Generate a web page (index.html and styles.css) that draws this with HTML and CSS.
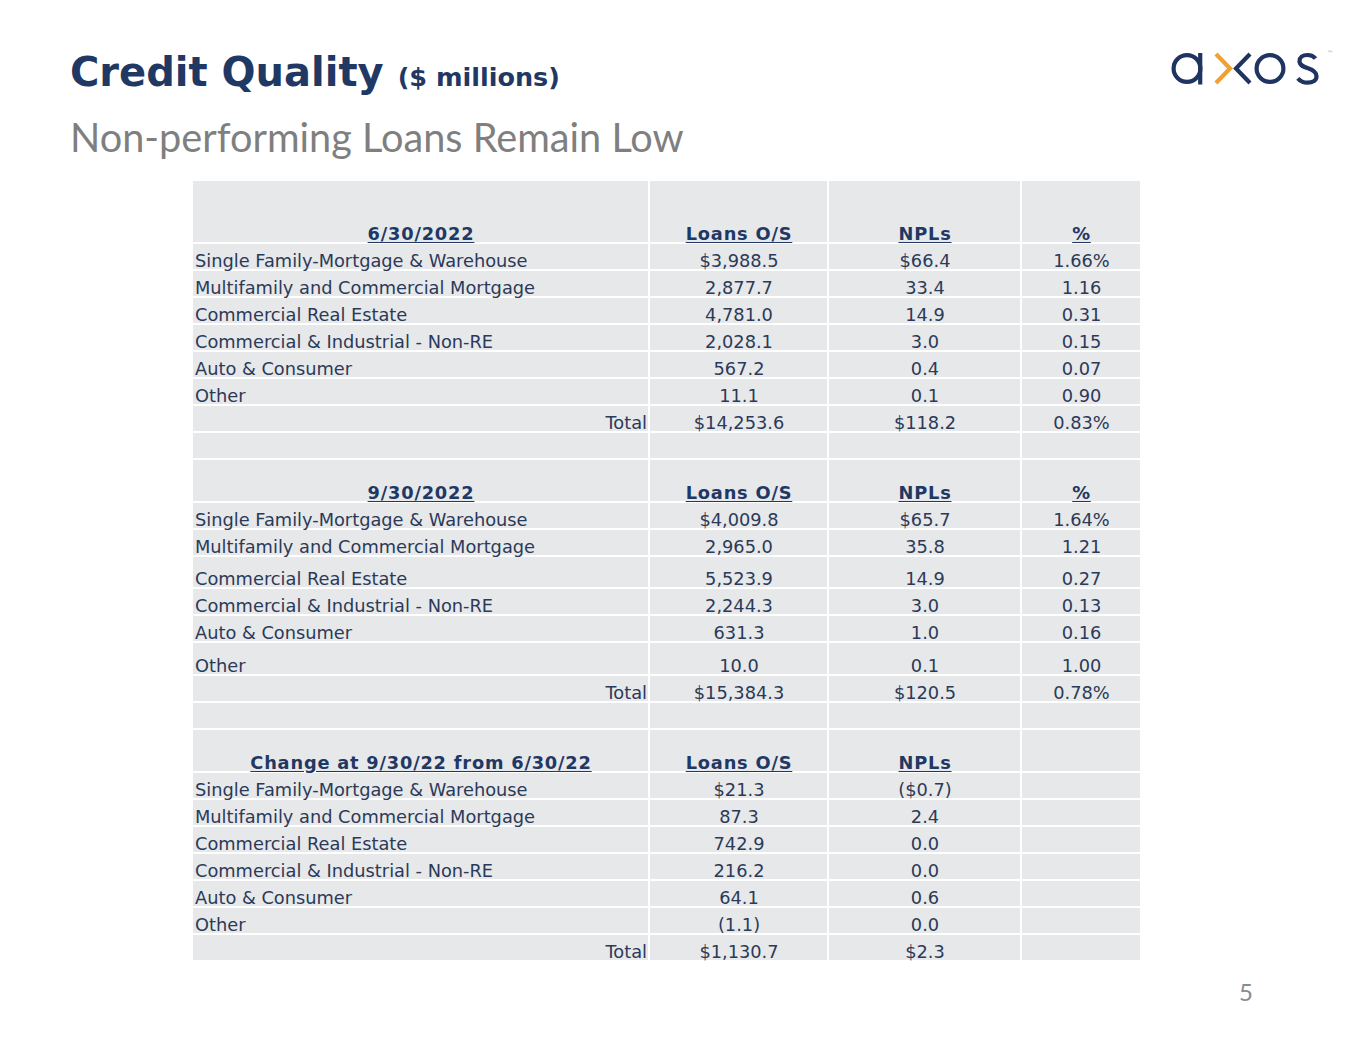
FILE: index.html
```html
<!DOCTYPE html>
<html lang="en">
<head>
<meta charset="utf-8">
<title>Credit Quality</title>
<link rel="stylesheet" href="styles.css">
</head>
<body>
<div class="slide">
  <header class="top">
    <div class="titles">
      <h1 class="title">Credit Quality <span class="unit">($ millions)</span></h1>
      <h2 class="subtitle">Non-performing Loans Remain Low</h2>
    </div>
    <svg class="logo" width="175" height="45" viewBox="1165 45 175 45" aria-label="axos">
      <g fill="none" stroke="#1f3461" stroke-width="4.2">
        <circle cx="1187" cy="68.5" r="13.4"/>
        <line x1="1200.2" y1="53" x2="1200.2" y2="84.5"/>
        <polyline points="1250,54 1236,68.5 1250,83"/>
        <circle cx="1270" cy="68.5" r="13.4"/>
        <path d="M1315.5 58.5 C1313.5 56 1310.5 55 1307.5 55 C1302.5 55 1299.5 57.5 1299.5 61.3 C1299.5 65.5 1304 67 1308 68.3 C1312.5 69.8 1316.5 71.5 1316.5 76.2 C1316.5 80.2 1312.8 82.7 1307.5 82.7 C1303.8 82.7 1300.3 81.2 1297.8 78.3"/>
      </g>
      <polyline points="1216,54 1230,68.5 1216,83" fill="none" stroke="#f0a034" stroke-width="4.2"/>
      <text x="1327" y="55" class="tm">™</text>
    </svg>
  </header>

  <table class="npl">
    <colgroup>
      <col class="c1"><col class="c2"><col class="c3"><col class="c4">
    </colgroup>
    <tbody>
      <tr class="hd hd-tall"><th>6/30/2022</th><th>Loans O/S</th><th>NPLs</th><th>%</th></tr>
      <tr><td class="lbl">Single Family-Mortgage &amp; Warehouse</td><td>$3,988.5</td><td>$66.4</td><td>1.66%</td></tr>
      <tr><td class="lbl">Multifamily and Commercial Mortgage</td><td>2,877.7</td><td>33.4</td><td>1.16</td></tr>
      <tr><td class="lbl">Commercial Real Estate</td><td>4,781.0</td><td>14.9</td><td>0.31</td></tr>
      <tr><td class="lbl">Commercial &amp; Industrial - Non-RE</td><td>2,028.1</td><td>3.0</td><td>0.15</td></tr>
      <tr><td class="lbl">Auto &amp; Consumer</td><td>567.2</td><td>0.4</td><td>0.07</td></tr>
      <tr><td class="lbl">Other</td><td>11.1</td><td>0.1</td><td>0.90</td></tr>
      <tr><td class="tot">Total</td><td>$14,253.6</td><td>$118.2</td><td>0.83%</td></tr>
      <tr><td></td><td></td><td></td><td></td></tr>

      <tr class="hd"><th>9/30/2022</th><th>Loans O/S</th><th>NPLs</th><th>%</th></tr>
      <tr><td class="lbl">Single Family-Mortgage &amp; Warehouse</td><td>$4,009.8</td><td>$65.7</td><td>1.64%</td></tr>
      <tr><td class="lbl">Multifamily and Commercial Mortgage</td><td>2,965.0</td><td>35.8</td><td>1.21</td></tr>
      <tr class="t30"><td class="lbl">Commercial Real Estate</td><td>5,523.9</td><td>14.9</td><td>0.27</td></tr>
      <tr><td class="lbl">Commercial &amp; Industrial - Non-RE</td><td>2,244.3</td><td>3.0</td><td>0.13</td></tr>
      <tr><td class="lbl">Auto &amp; Consumer</td><td>631.3</td><td>1.0</td><td>0.16</td></tr>
      <tr class="t31"><td class="lbl">Other</td><td>10.0</td><td>0.1</td><td>1.00</td></tr>
      <tr><td class="tot">Total</td><td>$15,384.3</td><td>$120.5</td><td>0.78%</td></tr>
      <tr><td></td><td></td><td></td><td></td></tr>

      <tr class="hd"><th>Change at 9/30/22 from 6/30/22</th><th>Loans O/S</th><th>NPLs</th><th></th></tr>
      <tr><td class="lbl">Single Family-Mortgage &amp; Warehouse</td><td>$21.3</td><td>($0.7)</td><td></td></tr>
      <tr><td class="lbl">Multifamily and Commercial Mortgage</td><td>87.3</td><td>2.4</td><td></td></tr>
      <tr><td class="lbl">Commercial Real Estate</td><td>742.9</td><td>0.0</td><td></td></tr>
      <tr><td class="lbl">Commercial &amp; Industrial - Non-RE</td><td>216.2</td><td>0.0</td><td></td></tr>
      <tr><td class="lbl">Auto &amp; Consumer</td><td>64.1</td><td>0.6</td><td></td></tr>
      <tr><td class="lbl">Other</td><td>(1.1)</td><td>0.0</td><td></td></tr>
      <tr><td class="tot">Total</td><td>$1,130.7</td><td>$2.3</td><td></td></tr>
    </tbody>
  </table>

  <footer class="pagenum">5</footer>
</div>
</body>
</html>
```

FILE: styles.css
```css
html, body {
  margin: 0;
  padding: 0;
  background: #ffffff;
}

.slide {
  width: 1365px;
  height: 1055px;
  overflow: hidden;
}

.top {
  display: flex;
  justify-content: space-between;
  align-items: flex-start;
  padding: 0 25px 0 70px;
}

.titles {
  display: flex;
  flex-direction: column;
}

.title {
  margin: 0;
  padding-top: 49px;
  font-family: "DejaVu Sans", Verdana, sans-serif;
  font-weight: bold;
  font-size: 40px;
  line-height: 46px;
  color: #1f3864;
  white-space: nowrap;
}

.unit {
  font-size: 25.5px;
}

.subtitle {
  margin: 13px 0 0 0;
  font-family: Lato, "Open Sans", sans-serif;
  font-weight: normal;
  font-size: 39.7px;
  line-height: 48px;
  color: #7f7f7f;
  white-space: nowrap;
}

.logo {
  display: block;
  margin-top: 45px;
}

.tm {
  font-family: "DejaVu Sans", sans-serif;
  font-size: 6px;
  fill: #8a8f99;
}

.npl {
  margin: 18px 0 0 191px;
  border-collapse: separate;
  border-spacing: 2px;
  table-layout: fixed;
  width: 951px;
  font-family: "DejaVu Sans", Verdana, sans-serif;
  font-size: 17.8px;
  color: #2b3a58;
}

.c1 { width: 455px; }
.c2 { width: 177px; }
.c3 { width: 191px; }
.c4 { width: 118px; }

.npl td,
.npl th {
  background: #e7e8ea;
  height: 25px;
  padding: 0 1px 0 2px;
  line-height: 17px;
  vertical-align: bottom;
  text-align: center;
  white-space: nowrap;
}

.npl .hd th {
  height: 41px;
  font-weight: bold;
  color: #1f3864;
  text-decoration: underline;
  text-underline-offset: 2px;
  letter-spacing: 0.8px;
}

.npl .hd-tall th {
  height: 61px;
}

.npl .t30 td { height: 30px; }
.npl .t31 td { height: 31px; }

.npl td.lbl { text-align: left; }
.npl td.tot { text-align: right; }

.pagenum {
  margin: 15px 0 0 0;
  padding-right: 112px;
  text-align: right;
  font-family: Lato, "Open Sans", sans-serif;
  font-size: 24px;
  line-height: 29px;
  color: #8c8c8c;
}
```
